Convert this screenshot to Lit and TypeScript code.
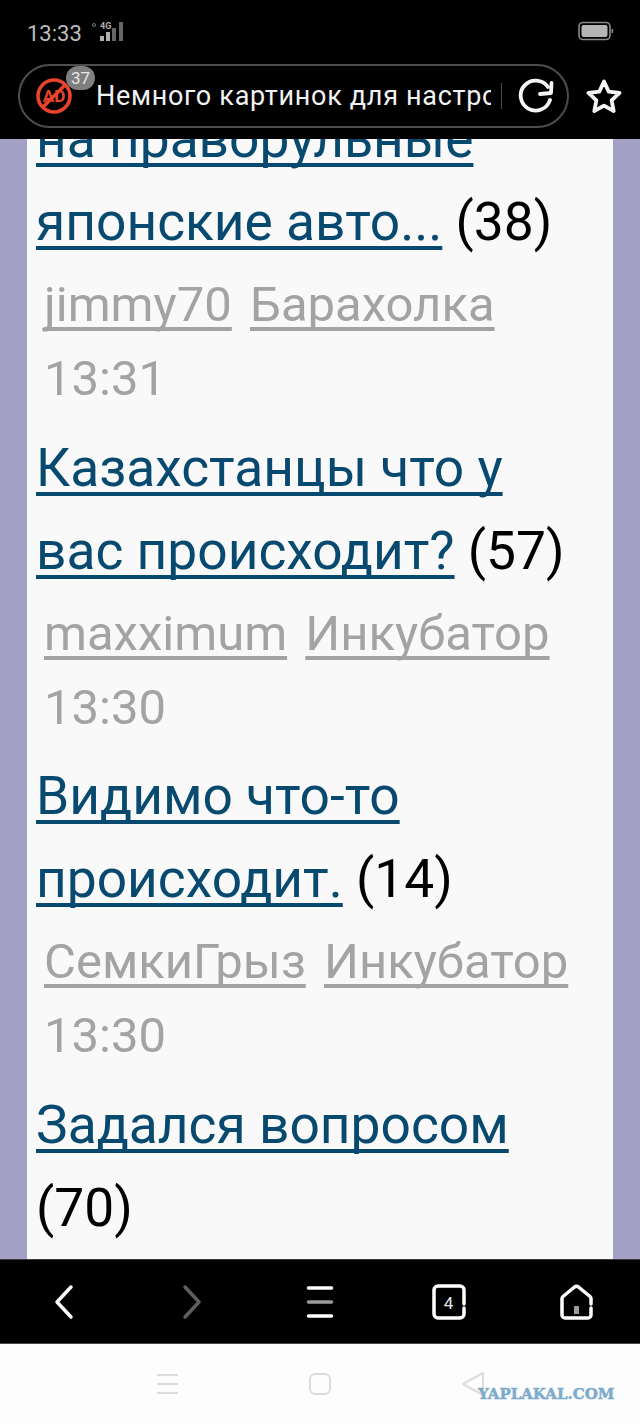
import { LitElement, css, html } from 'lit';
import { customElement } from 'lit/decorators.js';

interface Topic {
	title: string;
	count: number;
	author: string;
	forum: string;
	time: string;
}

const topics: Topic[] = [
	{ title: 'на праворульные японские авто...', count: 38, author: 'jimmy70', forum: 'Барахолка', time: '13:31' },
	{ title: 'Казахстанцы что у вас происходит?', count: 57, author: 'maxximum', forum: 'Инкубатор', time: '13:30' },
	{ title: 'Видимо что-то происходит.', count: 14, author: 'СемкиГрыз', forum: 'Инкубатор', time: '13:30' },
	{ title: 'Задался вопросом', count: 70, author: '', forum: '', time: '' },
];

@customElement('app-root')
export class AppRoot extends LitElement {
	static override styles = css`
		:host {
			display: flex;
			flex-direction: column;
			height: 1423px;
			font-family: Roboto, sans-serif;
			background: #fdfdfd;
		}

		.top {
			height: 139px;
			background: #000;
			flex: none;
			display: flex;
			flex-direction: column;
		}

		.status {
			height: 62px;
			padding: 0 26px 0 27px;
			display: flex;
			align-items: center;
			color: #bdbdbd;
			font-size: 22px;
		}

		.status .clock {
			margin-right: 10px;
			padding-top: 4px;
		}

		.status .battery {
			margin-left: auto;
		}

		.urlrow {
			display: flex;
			align-items: center;
			padding-left: 18px;
			height: 68px;
		}

		.urlbar {
			position: relative;
			width: 551px;
			height: 64px;
			box-sizing: border-box;
			border: 2px solid #4d4d4d;
			border-radius: 32px;
			display: flex;
			align-items: center;
			padding-left: 15px;
		}

		.badge {
			position: absolute;
			left: 46px;
			top: 0;
			width: 29px;
			height: 24px;
			border-radius: 12px;
			background: #7f7f7f;
			color: #e6e6e6;
			font-size: 17px;
			line-height: 24px;
			text-align: center;
		}

		.pagetitle {
			margin-left: 23px;
			width: 395px;
			overflow: hidden;
			white-space: nowrap;
			color: #f2f2f2;
			font-size: 27px;
			letter-spacing: 0.7px;
		}

		.sep {
			width: 1px;
			height: 26px;
			background: #4d4d4d;
			margin-left: 10px;
		}

		.reload {
			margin-left: 15px;
			display: block;
		}

		.star {
			margin-left: 17px;
			display: block;
		}

		.content {
			flex: none;
			height: 1120px;
			overflow: hidden;
			background: #a3a1c6;
			padding: 0 27px;
		}

		.panel {
			background: #f9f9f9;
			height: 100%;
			padding: 0 9px;
			overflow: hidden;
		}

		.list {
			margin-top: -41px;
			padding-right: 8px;
		}

		.topic-title {
			font-size: 53.3px;
			line-height: 83px;
			color: #000;
		}

		.topic-title a {
			color: #07496f;
			text-decoration: underline;
			text-decoration-thickness: 4px;
			text-decoration-skip-ink: none;
			text-underline-offset: 6px;
		}

		.meta {
			font-size: 49px;
			color: #a3a3a3;
			padding-left: 8px;
			line-height: 74px;
			margin-top: 4px;
			margin-bottom: 10.5px;
		}

		.meta a {
			color: #a3a3a3;
			text-decoration: underline;
			text-decoration-thickness: 4px;
			text-decoration-skip-ink: none;
			text-underline-offset: 6px;
			margin-right: 6px;
		}

		.toolbar {
			flex: none;
			height: 85px;
			box-sizing: border-box;
			background: #000;
			border-top: 1px solid #3a3a3a;
			border-bottom: 1px solid #4a4a4a;
			display: grid;
			grid-template-columns: repeat(5, 1fr);
			align-items: center;
			justify-items: center;
		}

		.toolbar svg {
			display: block;
		}

		.toolbar text {
			font-family: Roboto, sans-serif;
			font-size: 17px;
		}

		.sysnav {
			position: relative;
			flex: 1;
			display: flex;
			align-items: center;
			justify-content: center;
			gap: 129px;
			background: #fdfdfd;
		}

		.mark {
			position: absolute;
			left: 478px;
			top: 41px;
			color: #7eaacb;
			font-family: 'DejaVu Serif', serif;
			font-weight: 700;
			font-size: 15px;
			line-height: 18px;
			white-space: nowrap;
			-webkit-text-stroke: 0.5px #7eaacb;
		}
	`;

	private renderTopic(t: Topic) {
		return html`
			<div class="topic-title"><a href="#">${t.title}</a> (${t.count})</div>
			${t.author
				? html`<div class="meta"><a href="#">${t.author}</a> <a href="#">${t.forum}</a> ${t.time}</div>`
				: null}
		`;
	}

	private adIcon() {
		return html`<svg width="38" height="38" viewBox="0 0 38 38" fill="none" stroke="#e8432b" stroke-width="3.6">
			<circle cx="19" cy="19" r="16"></circle>
			<line x1="8" y1="30" x2="30" y2="8"></line>
			<text x="19" y="25" text-anchor="middle" font-family="Roboto, sans-serif" font-size="17" font-weight="700" fill="#e8432b" stroke="none">AD</text>
		</svg>`;
	}

	protected override render() {
		return html`
			<div class="top">
				<div class="status">
					<span class="clock">13:33</span>
					<svg width="36" height="22" viewBox="0 0 36 22" fill="#b0b0b0">
						<circle cx="2" cy="5" r="1.5" fill="none" stroke="#777" stroke-width="1"></circle>
						<text x="8" y="9" font-family="Roboto, sans-serif" font-size="9" font-weight="700">4G</text>
						<rect x="8" y="16" width="4" height="5"></rect>
						<rect x="14" y="12" width="4" height="9"></rect>
						<rect x="20" y="8" width="4" height="13" fill="#666"></rect>
						<rect x="27" y="2" width="4" height="19" fill="#666"></rect>
					</svg>
					<svg class="battery" width="36" height="20" viewBox="0 0 36 20">
						<rect x="1" y="1.500" width="31" height="17" rx="4" fill="none" stroke="#8a8a8a" stroke-width="1.600"></rect>
						<rect x="3.500" y="4" width="26" height="12" rx="2" fill="#b5b5b5"></rect>
						<rect x="33.500" y="8" width="1.600" height="4" fill="#8a8a8a"></rect>
					</svg>
				</div>
				<div class="urlrow">
					<div class="urlbar">
						${this.adIcon()}
						<span class="badge">37</span>
						<span class="pagetitle">Немного картинок для настроения</span>
						<span class="sep"></span>
						<svg class="reload" width="38" height="36" viewBox="0 0 38 36" fill="none" stroke="#f5f5f5" stroke-width="3.800" stroke-linecap="round" stroke-linejoin="round">
							<path d="M31 9A15 15 0 1 0 33 22"></path>
							<path d="M23 16L34 15L34.500 5"></path>
						</svg>
					</div>
					<svg class="star" width="36" height="34" viewBox="0 0 36 34" fill="none" stroke="#f5f5f5" stroke-width="3.800" stroke-linejoin="round">
						<path d="M18 2.500L22.700 12.600L33.500 13.900L25.600 21.400L27.700 32L18 26.700L8.300 32L10.400 21.400L2.500 13.900L13.300 12.600Z"></path>
					</svg>
				</div>
			</div>
			<div class="content">
				<div class="panel">
					<div class="list">${topics.map((t) => this.renderTopic(t))}</div>
				</div>
			</div>
			<div class="toolbar">
				<svg width="36" height="36" viewBox="0 0 36 36" fill="none" stroke="#fff" stroke-width="3.500" stroke-linecap="round" stroke-linejoin="round">
					<path d="M25 3L11 18L25 33"></path>
				</svg>
				<svg width="36" height="36" viewBox="0 0 36 36" fill="none" stroke="#5f5f5f" stroke-width="3.500" stroke-linecap="round" stroke-linejoin="round">
					<path d="M11 3L25 18L11 33"></path>
				</svg>
				<svg width="36" height="36" viewBox="0 0 36 36" fill="none" stroke-width="3.500" stroke-linecap="round">
					<path d="M6.500 4H29.500" stroke="#fff"></path>
					<path d="M6.500 18H29.500" stroke="#9a9a9a"></path>
					<path d="M6.500 32H29.500" stroke="#fff"></path>
				</svg>
				<svg width="36" height="36" viewBox="0 0 36 36" fill="none" stroke="#fff" stroke-width="3.500" stroke-linecap="round" stroke-linejoin="round">
					<path d="M34 24V30A4 4 0 0 1 30 34H8A4 4 0 0 1 4 30V6A4 4 0 0 1 8 2H30A4 4 0 0 1 34 6V20"></path>
					<text x="18.500" y="24.500" text-anchor="middle" fill="#e6e6e6" stroke="none">4</text>
				</svg>
				<svg width="36" height="36" viewBox="0 0 36 36" fill="none" stroke="#fff" stroke-width="3.500" stroke-linecap="round" stroke-linejoin="round">
					<path d="M33 24V31A3 3 0 0 1 30 34H7A3 3 0 0 1 4 31V14.500A3 3 0 0 1 5 12.500L16.500 3A3.500 3.500 0 0 1 20.500 3L32 12.500A3 3 0 0 1 33 14.500V20"></path>
					<rect x="16" y="22" width="5" height="8" fill="#9a9a9a" stroke="none"></rect>
				</svg>
			</div>
			<div class="sysnav">
				<svg width="24" height="24" viewBox="0 0 24 24" fill="none" stroke="#dcdcdc" stroke-width="2">
					<path d="M2 3H23M2 12H23M2 21H23"></path>
				</svg>
				<svg width="24" height="24" viewBox="0 0 24 24" fill="none" stroke="#dcdcdc" stroke-width="2">
					<rect x="2" y="2" width="20" height="20" rx="5"></rect>
				</svg>
				<svg width="24" height="26" viewBox="0 0 24 26" fill="none" stroke="#dcdcdc" stroke-width="2" stroke-linejoin="round">
					<path d="M22 2L2 13L22 24Z"></path>
				</svg>
				<span class="mark">YAPLAKAL.COM</span>
			</div>
		`;
	}
}
